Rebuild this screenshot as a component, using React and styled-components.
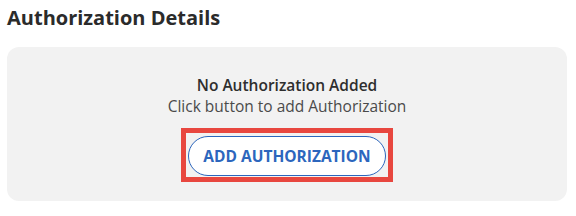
import React from "react";
import styled, { createGlobalStyle } from "styled-components";

const Global = createGlobalStyle`
  html, body { margin: 0; padding: 0; background: #ffffff; }
  body { font-family: "Open Sans", "Noto Sans", sans-serif; }
`;

const Page = styled.div`
  width: 576px;
  height: 216px;
  box-sizing: border-box;
  padding: 5px 9px 0 7px;
  display: flex;
  flex-direction: column;
`;

const Title = styled.h2`
  margin: 0;
  font-size: 20px;
  line-height: 26px;
  font-weight: 700;
  color: #2b2b2b;
`;

const Panel = styled.div`
  margin-top: 16px;
  height: 154px;
  background: #f2f2f2;
  border-radius: 12px;
  display: flex;
  flex-direction: column;
  align-items: center;
  padding-top: 27px;
  box-sizing: border-box;
`;

const Heading = styled.div`
  font-size: 15.5px;
  line-height: 22px;
  font-weight: 600;
  color: #2e2e2e;
`;

const Sub = styled.div`
  font-size: 15.5px;
  line-height: 21px;
  color: #4a4a4a;
`;

const Highlight = styled.div`
  margin-top: 11px;
  border: 5px solid #e8473f;
  padding: 3px 2px 1px 2px;
  display: flex;
`;

const Button = styled.button`
  height: 40px;
  width: 198px;
  border-radius: 20px;
  border: 1.5px solid #2c66bd;
  background: #ffffff;
  color: #2c66bd;
  font-family: "Open Sans", "Noto Sans", sans-serif;
  font-size: 15.5px;
  font-weight: 700;
  cursor: pointer;
  padding: 0;
`;

export default function App() {
  return (
    <>
      <Global />
      <Page>
        <Title>Authorization Details</Title>
        <Panel>
          <Heading>No Authorization Added</Heading>
          <Sub>Click button to add Authorization</Sub>
          <Highlight>
            <Button>ADD AUTHORIZATION</Button>
          </Highlight>
        </Panel>
      </Page>
    </>
  );
}
